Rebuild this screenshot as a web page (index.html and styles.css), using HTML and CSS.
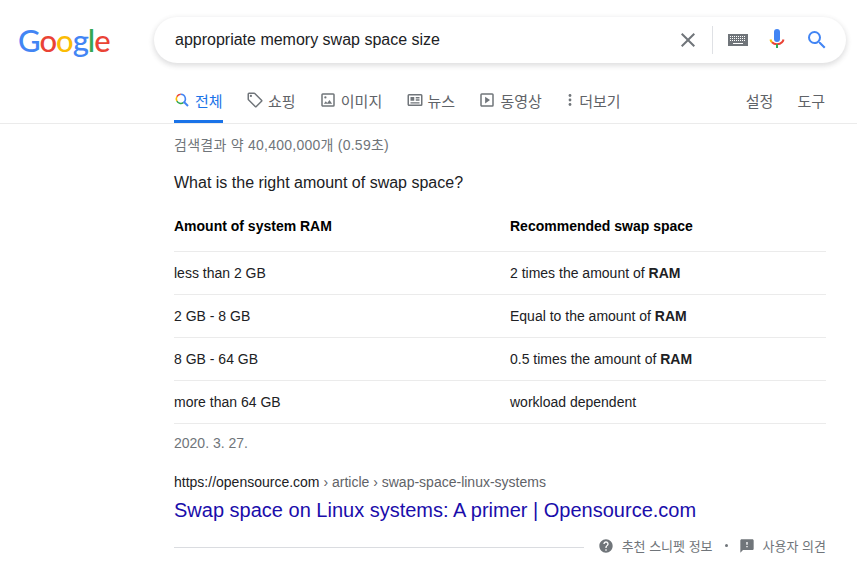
FILE: index.html
```html
<!DOCTYPE html>
<html lang="ko">
<head>
  <meta charset="UTF-8" />
  <meta name="viewport" content="width=device-width, initial-scale=1.0" />
  <title>appropriate memory swap space size - Google 검색</title>
  <link rel="stylesheet" href="styles.css">
</head>
<body>
  <header class="top">
    <div class="logo"><span class="blue">G</span><span class="red">o</span><span class="yellow">o</span><span class="blue">g</span><span class="green">l</span><span class="red">e</span></div>
    <div class="search">
      <span class="query">appropriate memory swap space size</span>
      <svg class="clear" width="24" height="24" viewBox="0 0 24 24"><path fill="#70757a" d="M19 6.41 17.59 5 12 10.59 6.41 5 5 6.41 10.59 12 5 17.59 6.41 19 12 13.41 17.59 19 19 17.59 13.41 12z"/></svg>
      <span class="divider"></span>
      <svg class="kbd" width="20" height="12" viewBox="0 0 20 12"><rect width="20" height="12" fill="#70757a"/><path stroke="#fff" stroke-width="1" stroke-dasharray="1 1" d="M2 2.5h16M2 4.5h16M2 6.5h16"/><path stroke="#fff" d="M5 9.5h10"/></svg>
      <svg class="mic" width="16" height="24" viewBox="0 0 16 24"><rect x="5" y="1" width="6" height="13" rx="3" fill="#4285f4"/><path d="M1.5 11.5c0 0 .3 1.5 1.500 2.800" stroke="#fbbc04" stroke-width="2" fill="none"/><path d="M3 14.300C4.200 15.500 6 16.200 8 16.200s3.800-.7 5-1.900 1.500-2.800 1.500-2.800" stroke="#ea4335" stroke-width="2" fill="none"/><rect x="7" y="16" width="2" height="4" fill="#34a853"/></svg>
      <svg class="glass" width="24" height="24" viewBox="0 0 24 24"><path fill="#4285f4" d="M15.500 14h-.79l-.28-.27A6.470 6.470 0 0 0 16 9.500 6.500 6.500 0 1 0 9.500 16c1.610 0 3.090-.59 4.230-1.570l.27.28v.79l5 4.990L20.490 19l-4.990-5zm-6 0C7.010 14 5 11.990 5 9.500S7.010 5 9.500 5 14 7.010 14 9.500 11.990 14 9.500 14z"/></svg>
    </div>
  </header>

  <nav class="tabs">
    <a class="tab active">
      <svg class="tab-all" width="16" height="16" viewBox="0 0 16 16" fill="none" stroke-width="1.600"><path d="M6.800 2.300a4.600 4.600 0 0 0-3.900 2.300" stroke="#ea4335"/><path d="M2.900 4.600a4.600 4.600 0 0 0 0 4.500" stroke="#fbbc04"/><path d="M2.900 9.100a4.600 4.600 0 0 0 6.300 1.700" stroke="#34a853"/><path d="M9.200 10.800a4.600 4.600 0 0 0-2.400-8.500" stroke="#4285f4"/><path d="M10 10l4 4" stroke="#4285f4" stroke-width="2"/></svg>
      전체
    </a>
    <a class="tab">
      <svg width="18" height="18" viewBox="0 0 24 24"><path fill="#70757a" d="M21.410 11.580l-9-9A2 2 0 0 0 11 2H4a2 2 0 0 0-2 2v7c0 .55.220 1.050.59 1.420l9 9a2 2 0 0 0 2.820 0l7-7a2 2 0 0 0 0-2.840zM13 20l-9-9V4h7l9 9-7 7z"/><circle cx="6.500" cy="6.500" r="1.500" fill="#70757a"/></svg>
      쇼핑
    </a>
    <a class="tab">
      <svg width="18" height="18" viewBox="0 0 24 24"><path fill="#70757a" d="M19 3H5a2 2 0 0 0-2 2v14c0 1.100.9 2 2 2h14a2 2 0 0 0 2-2V5a2 2 0 0 0-2-2zm0 16H5V5h14v14z"/><path fill="#70757a" d="M14 12l-3 4-2-2.500L6.500 17h11z"/><circle cx="8.500" cy="8.500" r="1.500" fill="#70757a"/></svg>
      이미지
    </a>
    <a class="tab">
      <svg width="18" height="18" viewBox="0 0 24 24"><path fill="#70757a" d="M20 4H4a2 2 0 0 0-2 2v12c0 1.100.9 2 2 2h16a2 2 0 0 0 2-2V6a2 2 0 0 0-2-2zm0 14H4V6h16v12z"/><path fill="#70757a" d="M6 8h5v5H6zM13 8h5v2h-5zM13 11h5v2h-5zM6 15h12v1.500H6z"/></svg>
      뉴스
    </a>
    <a class="tab">
      <svg width="18" height="18" viewBox="0 0 24 24"><path fill="#70757a" d="M19 3H5a2 2 0 0 0-2 2v14c0 1.100.9 2 2 2h14a2 2 0 0 0 2-2V5a2 2 0 0 0-2-2zm0 16H5V5h14v14z"/><path fill="#70757a" d="M9.500 7.500v9l6.500-4.500z"/></svg>
      동영상
    </a>
    <a class="tab more">
      <svg width="4" height="16" viewBox="0 0 4 16"><circle cx="2" cy="3.500" r="1.400" fill="#70757a"/><circle cx="2" cy="8" r="1.400" fill="#70757a"/><circle cx="2" cy="12.500" r="1.400" fill="#70757a"/></svg>
      더보기
    </a>
    <div class="tab-right">
      <a class="tab">설정</a>
      <a class="tab">도구</a>
    </div>
  </nav>

  <main class="content">
    <div class="stats">검색결과 약 40,400,000개 (0.59초)</div>
    <h2 class="question">What is the right amount of swap space?</h2>

    <table class="snippet">
      <thead>
        <tr><th class="col-ram">Amount of system RAM</th><th>Recommended swap space</th></tr>
      </thead>
      <tbody>
        <tr><td>less than 2 GB</td><td>2 times the amount of <b>RAM</b></td></tr>
        <tr><td>2 GB - 8 GB</td><td>Equal to the amount of <b>RAM</b></td></tr>
        <tr><td>8 GB - 64 GB</td><td>0.5 times the amount of <b>RAM</b></td></tr>
        <tr><td>more than 64 GB</td><td>workload dependent</td></tr>
      </tbody>
    </table>

    <div class="date">2020. 3. 27.</div>
    <div class="url">https://opensource.com <span class="crumbs">› article › swap-space-linux-systems</span></div>
    <a class="title">Swap space on Linux systems: A primer | Opensource.com</a>

    <div class="foot">
      <span class="foot-line"></span>
      <svg width="16" height="16" viewBox="0 0 24 24"><path fill="#70757a" d="M12 2C6.480 2 2 6.480 2 12s4.480 10 10 10 10-4.480 10-10S17.520 2 12 2zm1 17h-2v-2h2v2zm2.070-7.750l-.9.920C13.450 12.900 13 13.500 13 15h-2v-.5c0-1.100.45-2.100 1.170-2.830l1.240-1.260c.37-.36.590-.86.590-1.410 0-1.100-.9-2-2-2s-2 .9-2 2H8c0-2.210 1.790-4 4-4s4 1.790 4 4c0 .88-.36 1.680-.93 2.250z"/></svg>
      <span class="foot-text">추천 스니펫 정보</span>
      <span class="dot"></span>
      <svg width="16" height="16" viewBox="0 0 24 24"><path fill="#70757a" d="M20 2H4c-1.100 0-2 .9-2 2v18l4-4h14c1.100 0 2-.9 2-2V4c0-1.100-.9-2-2-2zm-7 12h-2v-2h2v2zm0-4h-2V6h2v4z"/></svg>
      <span class="foot-text">사용자 의견</span>
    </div>
  </main>
</body>
</html>
```

FILE: styles.css
```css
html, body {
  margin: 0;
  padding: 0;
  height: 565px;
  overflow: hidden;
}
body {
  font-family: "Liberation Sans", "Noto Sans CJK KR", Arial, sans-serif;
  background-color: #ffffff;
  color: #202124;
}
.top {
  display: flex;
  align-items: center;
  padding: 17px 11px 0 18px;
}
.logo {
  width: 136px;
  height: 46px;
  line-height: 46px;
  font-family: "Lato", sans-serif;
  font-size: 31px;
  font-weight: 500;
  letter-spacing: -1px;
}
.blue { color: #4285f4; }
.red { color: #ea4335; }
.yellow { color: #fbbc05; }
.green { color: #34a853; }
.search {
  flex: 1;
  height: 46px;
  border-radius: 23px;
  box-shadow: 0 2px 5px 1px rgba(64, 60, 67, 0.16);
  display: flex;
  align-items: center;
  padding: 0 17px 0 21px;
}
.query {
  flex: 1;
  font-size: 16px;
}
.clear { margin-right: 12px; }
.divider {
  width: 1px;
  height: 28px;
  background-color: #dfe1e5;
  margin-right: 15px;
}
.kbd { margin-right: 21px; }
.mic { margin-right: 20px; }
.tabs {
  display: flex;
  height: 60px;
  padding: 0 32px 0 174px;
  border-bottom: 1px solid #ebebeb;
  gap: 23.300px;
}
.tab {
  display: flex;
  align-items: center;
  gap: 4px;
  height: 60px;
  padding-top: 17px;
  box-sizing: border-box;
  border-bottom: 3px solid transparent;
  font-size: 15px;
  color: #5f6368;
}
.tab.active {
  color: #1a73e8;
  border-bottom-color: #1a73e8;
}
.tab-all { margin-right: 1px; }
.tab.more { gap: 7px; margin-left: 3px; }
.tab-right {
  margin-left: auto;
  display: flex;
  gap: 24px;
}
.content {
  width: 652px;
  margin-left: 174px;
}
.stats {
  margin-top: 13px;
  font-size: 14px;
  line-height: 16px;
  letter-spacing: 0.250px;
  color: #70757a;
}
.question {
  margin: 20px 0 0;
  font-size: 16px;
  font-weight: normal;
  line-height: 20px;
}
.snippet {
  width: 100%;
  margin-top: 14px;
  border-collapse: collapse;
  table-layout: fixed;
  font-size: 14px;
}
.snippet th {
  height: 44px;
  text-align: left;
  vertical-align: top;
  padding: 11px 0 0;
  box-sizing: border-box;
  color: #000000;
  border-bottom: 1px solid #ebebeb;
}
.col-ram { width: 336px; }
.snippet td {
  height: 42px;
  padding: 0;
  border-bottom: 1px solid #ebebeb;
}
.date {
  margin-top: 10px;
  font-size: 14px;
  line-height: 18px;
  color: #70757a;
}
.url {
  margin-top: 21px;
  font-size: 14px;
  line-height: 18px;
}
.crumbs { color: #5f6368; }
.title {
  display: block;
  margin-top: 6px;
  font-size: 20px;
  line-height: 26px;
  color: #1a0dab;
}
.foot {
  display: flex;
  align-items: center;
  height: 20px;
  margin-top: 13px;
  font-size: 13px;
  color: #70757a;
}
.foot-line {
  flex: 1;
  height: 1px;
  background-color: #dadce0;
  margin: 3px 14px 0 0;
}
.foot-text { margin-left: 8px; }
.dot {
  width: 3px;
  height: 3px;
  border-radius: 50%;
  background-color: #70757a;
  margin: 0 10.500px 0 12.500px;
}
```
